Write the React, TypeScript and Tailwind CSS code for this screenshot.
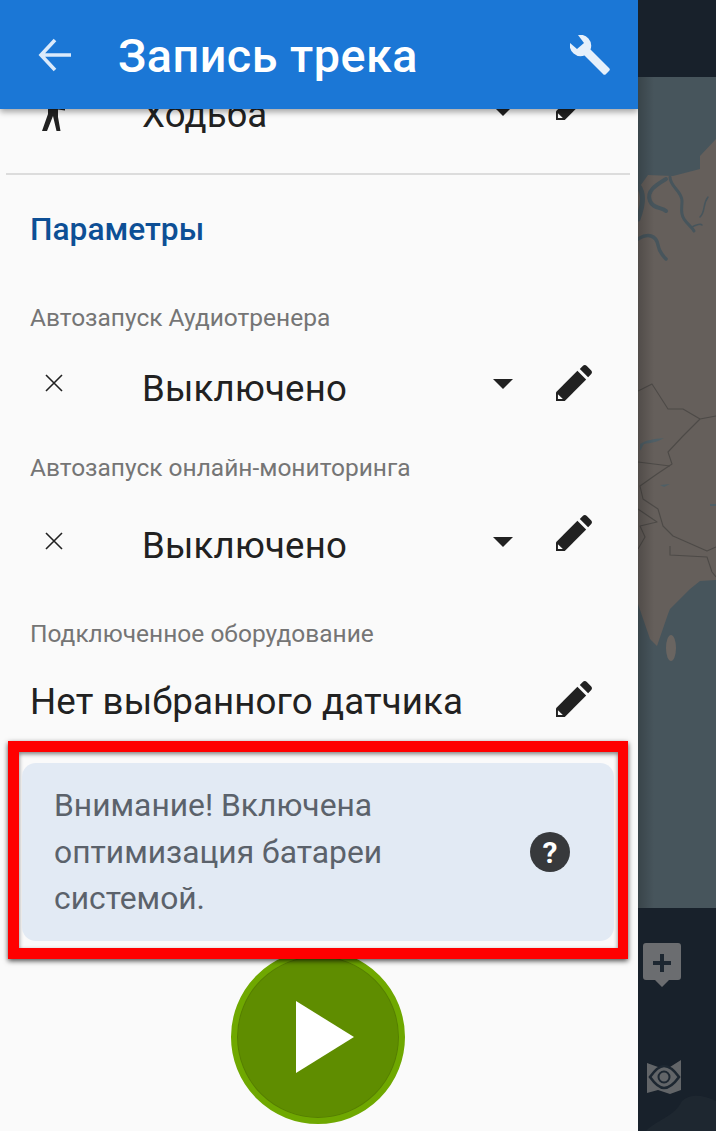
import React from "react";

const Pencil = () => (
  <svg width="38" height="36" viewBox="0 0 37 37" className="shrink-0">
    <path fill="#212121" d="M0 37V28L22 6 31 15 9 37Z" />
    <path fill="#212121" d="M24.500 4 27.500 1c1.200-1.300 3-1.300 4.200 0l4.300 4.300c1.300 1.200 1.300 3 0 4.200L33 12.500Z" />
    <path fill="#fafafa" d="M2 35v-5l5 5Z" />
  </svg>
);

const Caret = () => (
  <svg width="20" height="10" viewBox="0 0 20 10" className="block"><path fill="#212121" d="M0 0h20L10 10Z" /></svg>
);

const Cross = () => (
  <svg width="20" height="20" viewBox="0 0 20 20" className="block"><path stroke="#212121" strokeWidth="1.6" d="M2 2 18 18M18 2 2 18" /></svg>
);

const Walker = () => (
  <svg width="26" height="34" viewBox="0 0 26 34" className="block">
    <circle cx="12" cy="4" r="3.500" fill="#212121" />
    <path fill="#212121" d="M7 9h8l9 3v1.500l-7-1V20l2.500 14h-4L12 19 6 34H1L7 17Z" />
  </svg>
);

type RowProps = { icon: React.ReactNode; label: string; iconMt: string; textMt: string; caretMt: string; pencilMt: string };

const Row = ({ icon, label, iconMt, textMt, caretMt, pencilMt }: RowProps) => (
  <div className="flex items-start h-[60px] pl-[30px] pr-[45px]">
    <div className={`w-[48px] flex justify-center ${iconMt}`}>{icon}</div>
    <span className={`ml-[64px] flex-1 text-[36.6px] leading-[44px] text-[#212121] tracking-[0.2px] ${textMt}`}>{label}</span>
    <div className={`mr-[42px] ${caretMt}`}><Caret /></div>
    <div className={pencilMt}><Pencil /></div>
  </div>
);

const Label = ({ children, className }: { children: React.ReactNode; className: string }) => (
  <div className={`pl-[30px] text-[24.5px] leading-[30px] text-[#757575] ${className}`}>{children}</div>
);

const MapSide = () => (
  <div className="w-[78px] h-full flex flex-col bg-[#18212b]">
    <div className="h-[77px] shrink-0" />
    <svg className="h-[831px] w-[78px] block shrink-0" viewBox="0 0 78 831">
      <defs>
        <linearGradient id="edge" x1="0" y1="0" x2="1" y2="0">
          <stop offset="0" stopColor="#000" stopOpacity=".2" />
          <stop offset="1" stopColor="#000" stopOpacity="0" />
        </linearGradient>
      </defs>
      <rect width="78" height="831" fill="#47555c" />
      <path fill="#655f5b" d="M78 62 62 79V92L35 99 10 98 0 112V527L12 562 19 569 30 537 32 532 52 512 62 504 78 503Z" />
      <ellipse cx="33" cy="571" rx="5" ry="13" fill="#6a6561" />
      <g fill="none" stroke="#47555c" strokeLinecap="round">
        <path strokeWidth="4" d="M28 102C18 108 8 114 12 124c3 8 12 6 16 10" />
        <path strokeWidth="3" d="M32 100c0 10 12 14 12 24 0 8-2 12 2 18 3 5 8 8 10 12" />
        <path strokeWidth="5" d="M0 108c6 8 6 18 0 34" />
        <path strokeWidth="3.500" d="M0 162c10-6 18-4 20 6 1 6 4 10 8 14" />
        <path strokeWidth="1.500" d="M70 120c-6 8-2 14-8 20M54 150c4-2 8-4 10-2" />
      </g>
      <g fill="none" stroke="#4d4a47" strokeWidth="1.100" strokeLinejoin="round">
        <path d="M0 314 14 307 30 332 45 332 62 342 78 339" />
        <path d="M62 342 45 359 30 375 34 387 19 397 2 409 5 422 20 432 25 449 35 459 69 474 78 470" />
        <path d="M0 385 32 389" />
        <path d="M0 432 19 445 2 449 7 460 0 472" />
        <path d="M32 469V478L69 480 74 495 78 500" />
      </g>
      <path fill="#4f5f66" d="M2 367c6-4 14-5 24-6-6 4-14 5-20 6-2 3-3 7-4 6ZM22 408l10-1-6 3ZM72 427h6v2h-6Z" />
      <rect width="16" height="831" fill="url(#edge)" />
    </svg>
    <div className="flex-1 relative overflow-hidden flex flex-col items-start">
      <svg width="70" height="36" viewBox="0 0 70 36" className="absolute left-[8px] bottom-0">
        <path fill="#1e2730" d="M0 36C12 24 28 22 36 6c8-8 22-6 34 0v30Z" />
      </svg>
      <svg width="38" height="44" viewBox="0 0 38 44" className="relative mt-[35px] ml-[5px]">
        <path fill="#6b6d70" d="M3 0h32a3 3 0 0 1 3 3v31a3 3 0 0 1-3 3H26l-7 7-7-7H3a3 3 0 0 1-3-3V3a3 3 0 0 1 3-3Z" />
        <path fill="#1d2731" d="M17 11h4v7h7v4h-7v7h-4v-7h-7v-4h7Z" />
      </svg>
      <svg width="34" height="34" viewBox="0 0 34 34" className="relative mt-[73px] ml-[9px]">
        <path fill="#626568" d="M0 3 11 7 23 7 34 0V30L23 34 11 30 0 33Z" />
        <path fill="none" stroke="#1d2731" strokeWidth="2.600" d="M3 17C8 10 12 6 17 6s10 4 15 11c-5 7-10 11-15 11S8 24 3 17Z" />
        <circle cx="17" cy="17" r="5.500" fill="none" stroke="#1d2731" strokeWidth="2" />
      </svg>
    </div>
  </div>
);

export default function App() {
  return (
    <div className="flex w-[716px] h-[1131px] overflow-hidden bg-[#fafafa] [font-family:Roboto,'Liberation_Sans',sans-serif]">
      <div className="w-[638px] h-full flex flex-col relative overflow-hidden shrink-0">
        <header className="relative z-20 h-[109px] shrink-0 bg-[#1b77d6] shadow-[0_3px_6px_rgba(0,0,0,0.35)] flex items-center pl-[38px] pr-[28px]">
          <svg width="34" height="34" viewBox="0 0 34 34" className="shrink-0">
            <path fill="none" stroke="#dbeafb" strokeWidth="3.600" d="M33 17H3M17 2 3 17l14 15" />
          </svg>
          <h1 className="ml-[46px] flex-1 text-[46.7px] leading-[56px] mt-[3px] font-medium text-white tracking-[0.5px]">Запись трека</h1>
          <svg width="40" height="40" viewBox="0 0 40 40" className="shrink-0">
            <path fill="#e6f0fb" d="M8 0a11 11 0 0 1 12.500 14.500L39 33a2 2 0 0 1 0 3l-3 3a2 2 0 0 1-3 0L14.500 20.500A11 11 0 0 1 0 8l7 6 7-6Z" />
          </svg>
        </header>
        <main className="-mt-[25px] flex-1 flex flex-col">
          <Row icon={<Walker />} label="Ходьба" iconMt="mt-[13px]" textMt="mt-[9px]" caretMt="mt-[22px]" pencilMt="mt-0" />
          <div className="mt-[29px] ml-[6px] w-[624px] h-[2px] bg-[#dcdcdc]" />
          <h2 className="mt-[37px] pl-[30px] text-[31.7px] leading-[36px] font-medium text-[#0d4f95]">Параметры</h2>
          <Label className="mt-[55px]">Автозапуск Аудиотренера</Label>
          <div className="mt-[25px]">
            <Row icon={<Cross />} label="Выключено" iconMt="mt-[15px]" textMt="mt-[9px]" caretMt="mt-[21px]" pencilMt="mt-[7px]" />
          </div>
          <Label className="mt-[35px]">Автозапуск онлайн-мониторинга</Label>
          <div className="mt-[25px]">
            <Row icon={<Cross />} label="Выключено" iconMt="mt-[23px]" textMt="mt-[16px]" caretMt="mt-[29px]" pencilMt="mt-[7px]" />
          </div>
          <Label className="mt-[51px]">Подключенное оборудование</Label>
          <div className="mt-[32px] flex items-center h-[36px] pl-[30px] pr-[45px]">
            <span className="flex-1 text-[36.7px] leading-[40px] mt-[5px] text-[#212121] tracking-[0.1px]">Нет выбранного датчика</span>
            <Pencil />
          </div>
          <section className="relative z-10 mt-[24px] ml-[8px] w-[620px] h-[218px] shrink-0 border-[11px] border-r-[10px] border-[#ff0000] bg-[#fafafa] shadow-[0_2px_5px_rgba(0,0,0,0.7),inset_0_2px_4px_rgba(0,0,0,0.5)] pl-[3px] pr-[4px] pt-[11px] pb-[7px]">
            <div className="h-full rounded-[14px] bg-[#e2eaf4] pl-[32px] pr-[44px] flex items-center justify-between">
              <p className="text-[31.8px] leading-[46.5px] text-[#5b626b] w-[400px]">Внимание! Включена оптимизация батареи системой.</p>
              <div className="w-[40px] h-[40px] rounded-full bg-[#37393c] flex items-center justify-center text-white text-[30px] font-bold">?</div>
            </div>
          </section>
          <div className="-mt-[9px] ml-[231px] shrink-0 w-[174px] h-[174px] rounded-full bg-[#5f8d00] border-[6px] border-[#6fa800] shadow-[inset_0_0_0_1px_#567f00] flex items-center justify-center">
            <svg width="58" height="72" viewBox="0 0 58 72" className="ml-[14px]"><path fill="#fff" d="M0 0 58 36 0 72Z" /></svg>
          </div>
        </main>
      </div>
      <MapSide />
    </div>
  );
}
